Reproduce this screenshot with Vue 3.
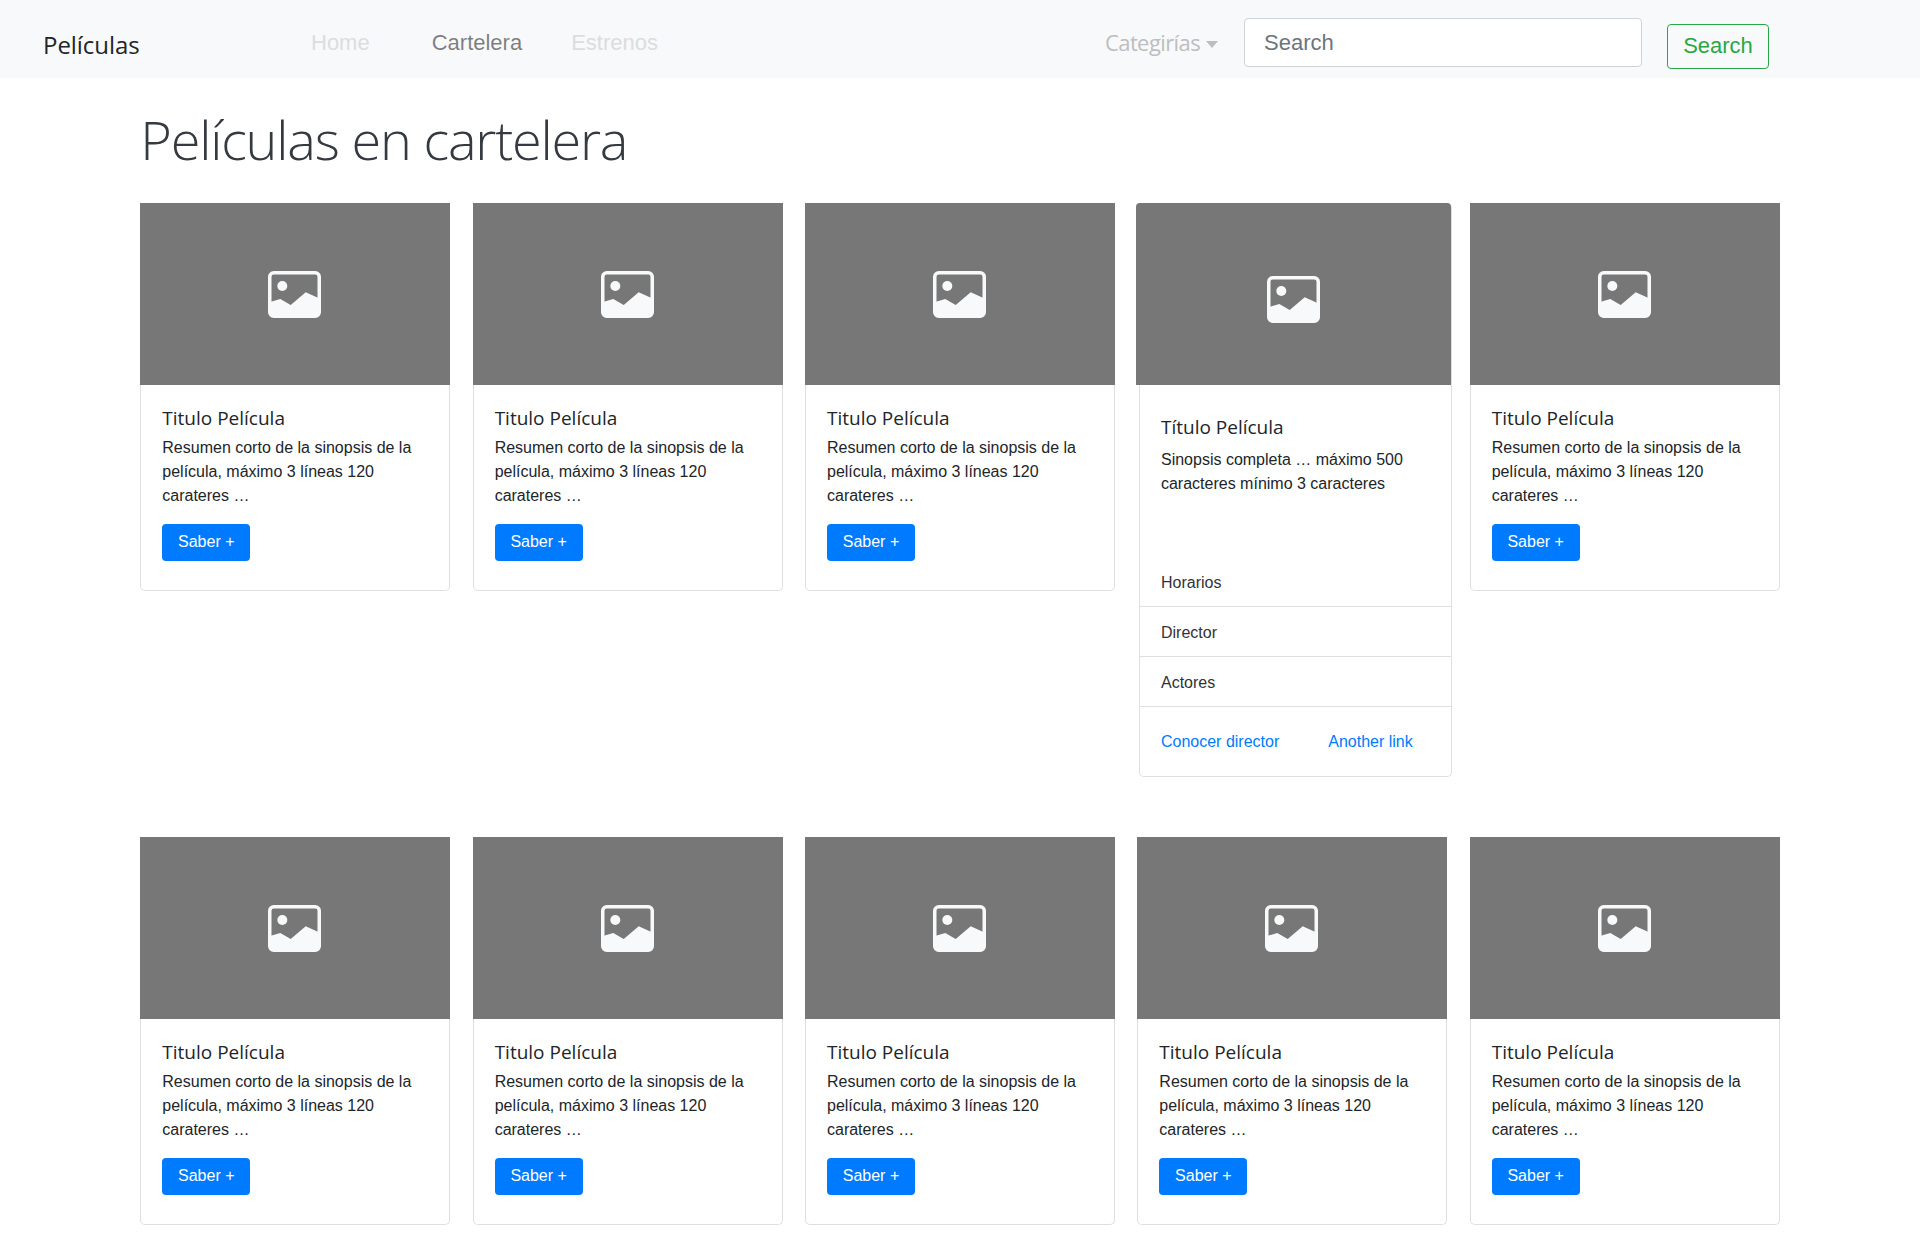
<template>
  <nav class="navbar">
    <a class="brand">Películas</a>
    <ul class="nav-links">
      <li class="muted">Home</li>
      <li class="active">Cartelera</li>
      <li class="muted">Estrenos</li>
    </ul>
    <a class="dropdown">Categirías<span class="caret"></span></a>
    <input class="search-input" type="text" placeholder="Search" />
    <button class="search-btn">Search</button>
  </nav>

  <main class="content">
    <h1 class="page-title">Películas en cartelera</h1>

    <div class="deck">
      <template v-for="n in 5" :key="n">
        <article v-if="n === 4" class="card card-open">
          <div class="thumb">
            <svg class="thumb-icon" viewBox="0 0 53 47" width="53" height="47">
              <rect x="1.75" y="1.75" width="49.5" height="43.5" rx="4" fill="none" stroke="#f8f9fa" stroke-width="3.5" />
              <circle cx="14.3" cy="15" r="5" fill="#f8f9fa" />
              <path d="M2 31 L12.3 28 L22.7 34 L37.7 21.3 L51 27.3 V43 Q51 45 49 45 H4 Q2 45 2 43 Z" fill="#f8f9fa" />
            </svg>
          </div>
          <div class="card-body tall">
            <h5 class="card-title">Título Película</h5>
            <p class="card-text">Sinopsis completa … máximo 500 caracteres mínimo 3 caracteres</p>
          </div>
          <ul class="list">
            <li v-for="item in details" :key="item">{{ item }}</li>
          </ul>
          <div class="card-links">
            <a>Conocer director</a>
            <a>Another link</a>
          </div>
        </article>

        <article v-else class="card">
          <div class="thumb">
            <svg class="thumb-icon" viewBox="0 0 53 47" width="53" height="47">
              <rect x="1.75" y="1.75" width="49.5" height="43.5" rx="4" fill="none" stroke="#f8f9fa" stroke-width="3.5" />
              <circle cx="14.3" cy="15" r="5" fill="#f8f9fa" />
              <path d="M2 31 L12.3 28 L22.7 34 L37.7 21.3 L51 27.3 V43 Q51 45 49 45 H4 Q2 45 2 43 Z" fill="#f8f9fa" />
            </svg>
          </div>
          <div class="card-body">
            <h5 class="card-title">Titulo Película</h5>
            <p class="card-text">{{ summary }}</p>
            <button class="btn-primary">Saber +</button>
          </div>
        </article>
      </template>
    </div>

    <div class="deck second">
      <article v-for="n in 5" :key="n" class="card">
        <div class="thumb">
          <svg class="thumb-icon" viewBox="0 0 53 47" width="53" height="47">
            <rect x="1.75" y="1.75" width="49.5" height="43.5" rx="4" fill="none" stroke="#f8f9fa" stroke-width="3.5" />
            <circle cx="14.3" cy="15" r="5" fill="#f8f9fa" />
            <path d="M2 31 L12.3 28 L22.7 34 L37.7 21.3 L51 27.3 V43 Q51 45 49 45 H4 Q2 45 2 43 Z" fill="#f8f9fa" />
          </svg>
        </div>
        <div class="card-body">
          <h5 class="card-title">Titulo Película</h5>
          <p class="card-text">{{ summary }}</p>
          <button class="btn-primary">Saber +</button>
        </div>
      </article>
    </div>
  </main>
</template>

<script setup>
const summary = 'Resumen corto de la sinopsis de la película, máximo 3 líneas 120 carateres …'
const details = ['Horarios', 'Director', 'Actores']
</script>

<style>
body {
  background: #fff;
}
</style>

<style scoped>
.navbar {
  display: flex;
  align-items: center;
  height: 78px;
  background: #f8f9fa;
  font-family: "Liberation Sans", Arial, sans-serif;
  box-sizing: border-box;
}
.brand {
  margin-left: 43px;
  width: 268px;
  font-family: "Open Sans", sans-serif;
  font-size: 24px;
  color: #212529;
  padding-top: 10px;
  letter-spacing: -0.05px;
}
.nav-links {
  display: flex;
  list-style: none;
  margin: 0;
  padding: 7px 0 0;
  width: 794px;
  font-size: 22px;
}
.nav-links li {
  margin-right: 62px;
}
.nav-links li.active {
  margin-right: 49px;
  color: rgba(0, 0, 0, 0.5);
}
.nav-links li.muted {
  color: #dcdddd;
}
.dropdown {
  width: 139px;
  padding-top: 5px;
  font-family: "Open Sans", sans-serif;
  font-size: 22px;
  color: #bcbebf;
  letter-spacing: -0.6px;
}
.caret {
  display: inline-block;
  margin-left: 6px;
  vertical-align: 3px;
  border-top: 7px solid #bcbebf;
  border-left: 6px solid transparent;
  border-right: 6px solid transparent;
}
.search-input {
  box-sizing: border-box;
  width: 398px;
  height: 49px;
  margin-top: 6px;
  padding: 2px 19px 0;
  border: 1px solid #ced4da;
  border-radius: 4px;
  background: #fff;
  font-family: inherit;
  font-size: 22px;
  outline: none;
}
.search-input::placeholder {
  color: #6c757d;
  opacity: 1;
}
.search-btn {
  box-sizing: border-box;
  width: 102px;
  height: 45px;
  margin: 14px 0 0 25px;
  border: 1px solid #28a745;
  border-radius: 4px;
  background: transparent;
  color: #28a745;
  font-family: inherit;
  font-size: 22px;
  padding: 0;
}
.content {
  width: 1640px;
  margin-left: 140.3px;
  font-family: "Liberation Sans", Arial, sans-serif;
}
.page-title {
  margin: 24px 0 27px 0;
  height: 74px;
  font-family: "Open Sans", sans-serif;
  font-weight: 300;
  font-size: 54px;
  line-height: 74px;
  color: #343a40;
  letter-spacing: -1.2px;
}
.deck {
  display: grid;
  grid-template-columns: repeat(5, 310px);
  column-gap: 22.35px;
  align-items: start;
}
.deck.second {
  margin-top: 60px;
}
.card {
  box-sizing: border-box;
  height: 388px;
  border: 1px solid #dfdfdf;
  border-top: 0;
  border-radius: 5px;
  background: #fff;
}
.thumb {
  display: flex;
  align-items: center;
  justify-content: center;
  height: 182px;
  margin: 0 -1px;
  background: #777;
}
.thumb-icon {
  margin-right: 1px;
}
.card-body {
  padding: 21px 21px 0;
}
.card-title {
  margin: 0 0 6px;
  font-family: "Open Sans", sans-serif;
  font-weight: 400;
  font-size: 19px;
  line-height: 24px;
  color: #212529;
}
.card-text {
  margin: 0 0 16px;
  font-size: 16px;
  line-height: 24px;
  color: #212529;
}
.btn-primary {
  box-sizing: border-box;
  width: 88px;
  height: 37px;
  padding: 0 0 2px;
  border: 0;
  border-radius: 4px;
  background: #007bff;
  color: #fff;
  font-family: inherit;
  font-size: 16px;
}
.card-open {
  width: 313px;
  height: 574px;
  margin-left: 1.65px;
}
.card-open .thumb {
  margin: 0 0 0 -4px;
  padding-top: 10px;
  box-sizing: border-box;
  border-radius: 4px 4px 0 0;
}
.card-open .thumb-icon {
  margin-right: 0;
}
.card-body.tall {
  height: 184px;
  box-sizing: border-box;
  padding-top: 30px;
}
.card-open .card-title {
  margin-bottom: 9px;
}
.list {
  list-style: none;
  margin: 0;
  padding: 0;
}
.list li {
  box-sizing: border-box;
  height: 50px;
  padding: 14px 21px 0;
  font-size: 16px;
  line-height: 24px;
  color: #333;
  border-bottom: 1px solid #dfdfdf;
}
.list li:first-child {
  height: 38px;
  padding-top: 2px;
}
.card-links {
  display: flex;
  gap: 49px;
  padding: 23px 21px 0;
  font-size: 16px;
  line-height: 24px;
  color: #007bff;
}
</style>
